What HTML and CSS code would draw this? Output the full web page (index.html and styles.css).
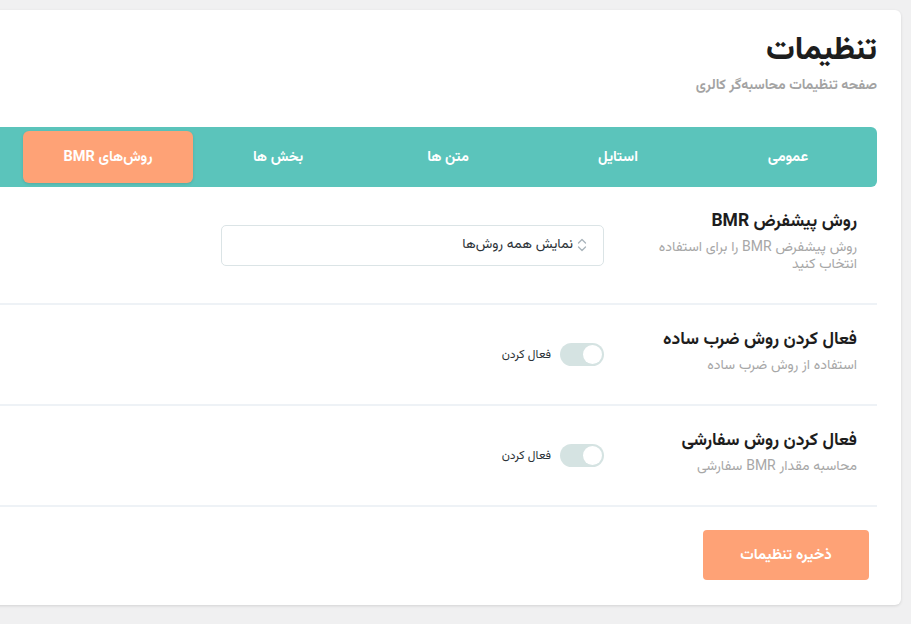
FILE: index.html
```html
<!DOCTYPE html>
<html lang="fa" dir="rtl">
<head>
<meta charset="utf-8">
<title>تنظیمات</title>
<link rel="stylesheet" href="styles.css">
</head>
<body>
<div class="wrap">
  <div class="card">
    <h1 class="title">تنظیمات</h1>
    <p class="subtitle">صفحه تنظیمات محاسبه‌گر کالری</p>

    <nav class="tabs">
      <a class="tab">عمومی</a>
      <a class="tab">استایل</a>
      <a class="tab">متن ها</a>
      <a class="tab">بخش ها</a>
      <a class="tab active">روش‌های BMR</a>
      <a class="tab"></a>
    </nav>

    <div class="row">
      <div class="label">
        <div class="label-title">روش پیشفرض BMR</div>
        <div class="label-desc">روش پیشفرض BMR را برای استفاده انتخاب کنید</div>
      </div>
      <div class="control">
        <div class="select">
          <svg class="chev" width="10" height="14" viewBox="0 0 10 14"><path d="M1.5 5 L5 1.5 L8.5 5 M1.5 9 L5 12.5 L8.5 9" fill="none" stroke="#a9b4bb" stroke-width="1.3" stroke-linecap="round" stroke-linejoin="round"/></svg>
          <span>نمایش همه روش‌ها</span>
        </div>
      </div>
    </div>

    <div class="row">
      <div class="label">
        <div class="label-title">فعال کردن روش ضرب ساده</div>
        <div class="label-desc">استفاده از روش ضرب ساده</div>
      </div>
      <div class="control">
        <div class="switch-wrap">
          <span class="switch"><span class="knob"></span></span>
          <span class="switch-label">فعال کردن</span>
        </div>
      </div>
    </div>

    <div class="row">
      <div class="label">
        <div class="label-title">فعال کردن روش سفارشی</div>
        <div class="label-desc">محاسبه مقدار BMR سفارشی</div>
      </div>
      <div class="control">
        <div class="switch-wrap">
          <span class="switch"><span class="knob"></span></span>
          <span class="switch-label">فعال کردن</span>
        </div>
      </div>
    </div>

    <div class="actions">
      <button class="save">ذخیره تنظیمات</button>
    </div>
  </div>
</div>
</body>
</html>
```

FILE: styles.css
```css
html, body {
  margin: 0;
  padding: 0;
}
body {
  background: #f0f0f1;
  font-family: "Vazirmatn", "Noto Sans Arabic", "DejaVu Sans", sans-serif;
  color: #1d2327;
  overflow: hidden;
  height: 624px;
}
.wrap {
  padding: 10px 10px 0 0;
  display: flex;
  justify-content: flex-start;
}
.card {
  flex: 0 0 1180px;
  width: 1180px;
  background: #fff;
  border-radius: 6px;
  box-shadow: 0 1px 3px rgba(0,0,0,0.12);
  padding: 20px 24px 25px 24px;
  box-sizing: border-box;
  height: 595px;
}
.title {
  margin: 1px 0 0 0;
  font-size: 32px;
  font-weight: 800;
  line-height: 40px;
  color: #1d1d1d;
}
.subtitle {
  margin: 5px 0 0 0;
  font-size: 14px;
  font-weight: bold;
  color: #a3a3a3;
  line-height: 20px;
}
.tabs {
  margin-top: 31px;
  background: #5bc4bb;
  border-radius: 6px;
  padding: 4px;
  display: flex;
  height: 60px;
  box-sizing: border-box;
}
.tab {
  flex: 0 0 170px;
  display: flex;
  align-items: center;
  justify-content: center;
  color: #fff;
  font-weight: bold;
  font-size: 14.5px;
  border-radius: 6px;
}
.tab.active {
  background: #fea276;
  box-shadow: 0 1px 3px rgba(0,0,0,0.12);
}
.row {
  display: flex;
  align-items: center;
  border-bottom: 2px solid #eef2f6;
}
.label {
  width: 205px;
  margin-left: -5px;
  padding: 22px 20px 29px 10px;
  flex: 0 0 auto;
}
.label-title {
  font-size: 17.5px;
  font-weight: bold;
  line-height: 26px;
  color: #1d1d1d;
  white-space: nowrap;
}
.label-desc {
  margin-top: 5px;
  font-size: 14px;
  line-height: 17px;
  color: #a7a7a7;
}
.control {
  padding-right: 43px;
}
.select {
  width: 383px;
  height: 41px;
  box-sizing: border-box;
  border: 1px solid #dbe4e6;
  border-radius: 5px;
  display: flex;
  align-items: center;
  padding-right: 16px;
  gap: 4px;
  font-size: 14px;
  color: #2c3338;
}
.chev {
  display: block;
}
.switch-wrap {
  display: flex;
  align-items: center;
  gap: 9px;
}
.switch {
  width: 44px;
  height: 23px;
  border-radius: 12px;
  background: #d5e3e2;
  display: flex;
  align-items: center;
  padding: 0 2px;
  box-sizing: border-box;
}
.knob {
  width: 19px;
  height: 19px;
  border-radius: 50%;
  background: #fff;
}
.switch-label {
  font-size: 12px;
  color: #2c3338;
}
.actions {
  padding: 23px 8px 0 0;
}
.save {
  width: 166px;
  height: 50px;
  border: none;
  border-radius: 4px;
  background: #fea276;
  color: #fff;
  font-family: "Vazirmatn", "Noto Sans Arabic", "DejaVu Sans", sans-serif;
  font-weight: bold;
  font-size: 15px;
}
```
